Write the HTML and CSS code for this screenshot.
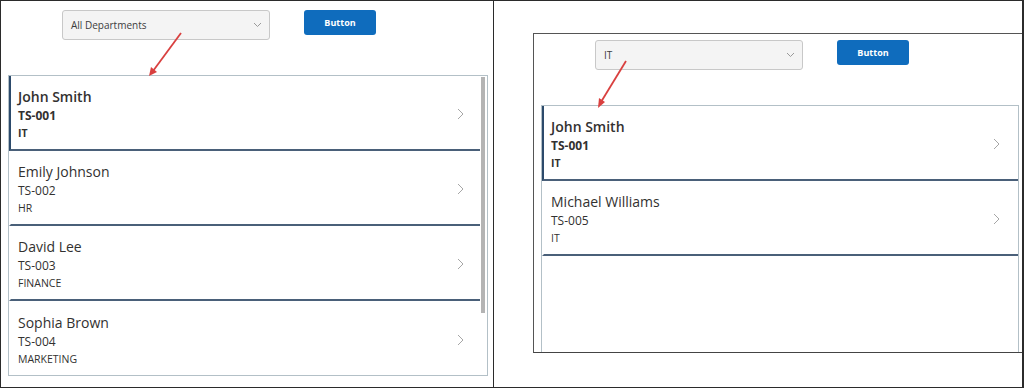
FILE: index.html
```html
<!DOCTYPE html>
<html lang="en">
<head>
<meta charset="utf-8">
<title>Employee list filter</title>
<link rel="stylesheet" href="styles.css">
</head>
<body>
<div class="frame">
  <section class="panel panel-left">
    <div class="app">
      <div class="toolbar">
        <div class="dropdown">
          <span class="dropdown-value">All Departments</span>
          <svg class="dropdown-chevron" width="9" height="6" viewBox="0 0 9 6"><path d="M1 1 L4.5 4.5 L8 1" fill="none" stroke="#9a9a9a" stroke-width="1"/></svg>
        </div>
        <button class="btn">Button</button>
      </div>
      <div class="list">
        <div class="items">
          <div class="item selected">
            <div class="item-text"><div class="name">John Smith</div><div class="code">TS-001</div><div class="dept">IT</div></div>
            <svg class="chev" width="7" height="12" viewBox="0 0 7 12"><path d="M1 1 L6 6 L1 11" fill="none" stroke="#a6a6a6" stroke-width="1"/></svg>
          </div>
          <div class="item">
            <div class="item-text"><div class="name">Emily Johnson</div><div class="code">TS-002</div><div class="dept">HR</div></div>
            <svg class="chev" width="7" height="12" viewBox="0 0 7 12"><path d="M1 1 L6 6 L1 11" fill="none" stroke="#a6a6a6" stroke-width="1"/></svg>
          </div>
          <div class="item">
            <div class="item-text"><div class="name">David Lee</div><div class="code">TS-003</div><div class="dept">FINANCE</div></div>
            <svg class="chev" width="7" height="12" viewBox="0 0 7 12"><path d="M1 1 L6 6 L1 11" fill="none" stroke="#a6a6a6" stroke-width="1"/></svg>
          </div>
          <div class="item item-last">
            <div class="item-text"><div class="name">Sophia Brown</div><div class="code">TS-004</div><div class="dept">MARKETING</div></div>
            <svg class="chev" width="7" height="12" viewBox="0 0 7 12"><path d="M1 1 L6 6 L1 11" fill="none" stroke="#a6a6a6" stroke-width="1"/></svg>
          </div>
        </div>
        <div class="scrollbar"><div class="scroll-thumb"></div></div>
      </div>
    </div>
    <svg class="arrow arrow-left" width="50" height="60" viewBox="0 0 50 60">
      <line x1="41" y1="2" x2="13" y2="40" stroke="#d9403f" stroke-width="1.8"/>
      <polygon points="9,45 11,36 17,41" fill="#d9403f"/>
    </svg>
  </section>

  <div class="right-area">
    <section class="panel panel-right">
      <div class="app app-right">
        <div class="toolbar">
          <div class="dropdown">
            <span class="dropdown-value">IT</span>
            <svg class="dropdown-chevron" width="9" height="6" viewBox="0 0 9 6"><path d="M1 1 L4.5 4.5 L8 1" fill="none" stroke="#9a9a9a" stroke-width="1"/></svg>
          </div>
          <button class="btn">Button</button>
        </div>
        <div class="list list-right">
          <div class="items">
            <div class="item selected">
              <div class="item-text"><div class="name">John Smith</div><div class="code">TS-001</div><div class="dept">IT</div></div>
              <svg class="chev" width="7" height="12" viewBox="0 0 7 12"><path d="M1 1 L6 6 L1 11" fill="none" stroke="#a6a6a6" stroke-width="1"/></svg>
            </div>
            <div class="item">
              <div class="item-text"><div class="name">Michael Williams</div><div class="code">TS-005</div><div class="dept">IT</div></div>
              <svg class="chev" width="7" height="12" viewBox="0 0 7 12"><path d="M1 1 L6 6 L1 11" fill="none" stroke="#a6a6a6" stroke-width="1"/></svg>
            </div>
          </div>
        </div>
      </div>
      <svg class="arrow arrow-right" width="50" height="60" viewBox="0 0 50 60">
        <line x1="41" y1="2" x2="16" y2="43" stroke="#d9403f" stroke-width="1.8"/>
        <polygon points="13,49 14,39 20,43" fill="#d9403f"/>
      </svg>
    </section>
  </div>
</div>
</body>
</html>
```

FILE: styles.css
```css
* { box-sizing: border-box; }

html, body {
  margin: 0;
  padding: 0;
  background: #ffffff;
}

body {
  font-family: "Open Sans", "Noto Sans", "Liberation Sans", sans-serif;
  color: #323130;
}

.frame {
  width: 1024px;
  height: 388px;
  border: 1px solid #2b2b2b;
  border-right-width: 2px;
  display: flex;
  overflow: hidden;
}

.panel {
  position: relative;
  overflow: hidden;
}

.panel-left {
  width: 493px;
  height: 100%;
  border-right: 1px solid #2b2b2b;
}

.right-area {
  flex: 1;
  padding-left: 39px;
  padding-top: 32px;
}

.panel-right {
  height: 320px;
  border-top: 1px solid #555555;
  border-left: 1px solid #555555;
  border-bottom: 1px solid #444444;
}

.app {
  padding-top: 9px;
}

.app-right {
  padding-top: 6px;
}

.toolbar {
  display: flex;
  align-items: flex-start;
  padding-left: 61px;
  gap: 34px;
}

.dropdown {
  width: 208px;
  height: 30px;
  background: #f4f4f4;
  border: 1px solid #c8c8c8;
  border-radius: 3px;
  display: flex;
  align-items: center;
  justify-content: space-between;
  padding: 0 7px 0 8px;
}

.dropdown-value {
  font-size: 10px;
  color: #3d3d3d;
}

.dropdown-chevron {
  display: block;
}

.btn {
  width: 72px;
  height: 25px;
  background: #0f6cbd;
  color: #ffffff;
  border: none;
  border-radius: 3px;
  font-family: inherit;
  font-size: 9px;
  font-weight: 700;
  padding: 0;
}

.list {
  margin-top: 35px;
  margin-left: 7px;
  width: 480px;
  height: 301px;
  border: 1px solid #b3c0c7;
  display: flex;
  overflow: hidden;
}

.list-right {
  width: 478px;
}

.items {
  flex: 1;
  min-width: 0;
}

.scrollbar {
  width: 7px;
  padding: 1px 2px 0 1px;
}

.scroll-thumb {
  height: 236px;
  background: #b4b4b4;
}

.item {
  height: 75px;
  display: flex;
  align-items: center;
  justify-content: space-between;
  padding: 2px 16px 0 7px;
  border-left: 2px solid transparent;
  border-bottom: 2px solid #4a6079;
}

.item-last {
  border-bottom: none;
}

.item.selected {
  border-left-color: #2c4a6b;
}

.item-text {
  display: flex;
  flex-direction: column;
}

.name {
  font-size: 14px;
  line-height: 20px;
  color: #323130;
}

.code {
  font-size: 12px;
  line-height: 18px;
  color: #323130;
}

.dept {
  font-size: 10.5px;
  line-height: 16px;
  color: #323130;
}

.selected .name { font-weight: 600; }
.selected .code { font-weight: 700; }
.selected .dept { font-weight: 700; }

.chev {
  display: block;
}

.list-right .item {
  padding-right: 18px;
}

.arrow {
  position: absolute;
  pointer-events: none;
}

.arrow-left {
  left: 139px;
  top: 30px;
}

.arrow-right {
  left: 51px;
  top: 25px;
}
```
